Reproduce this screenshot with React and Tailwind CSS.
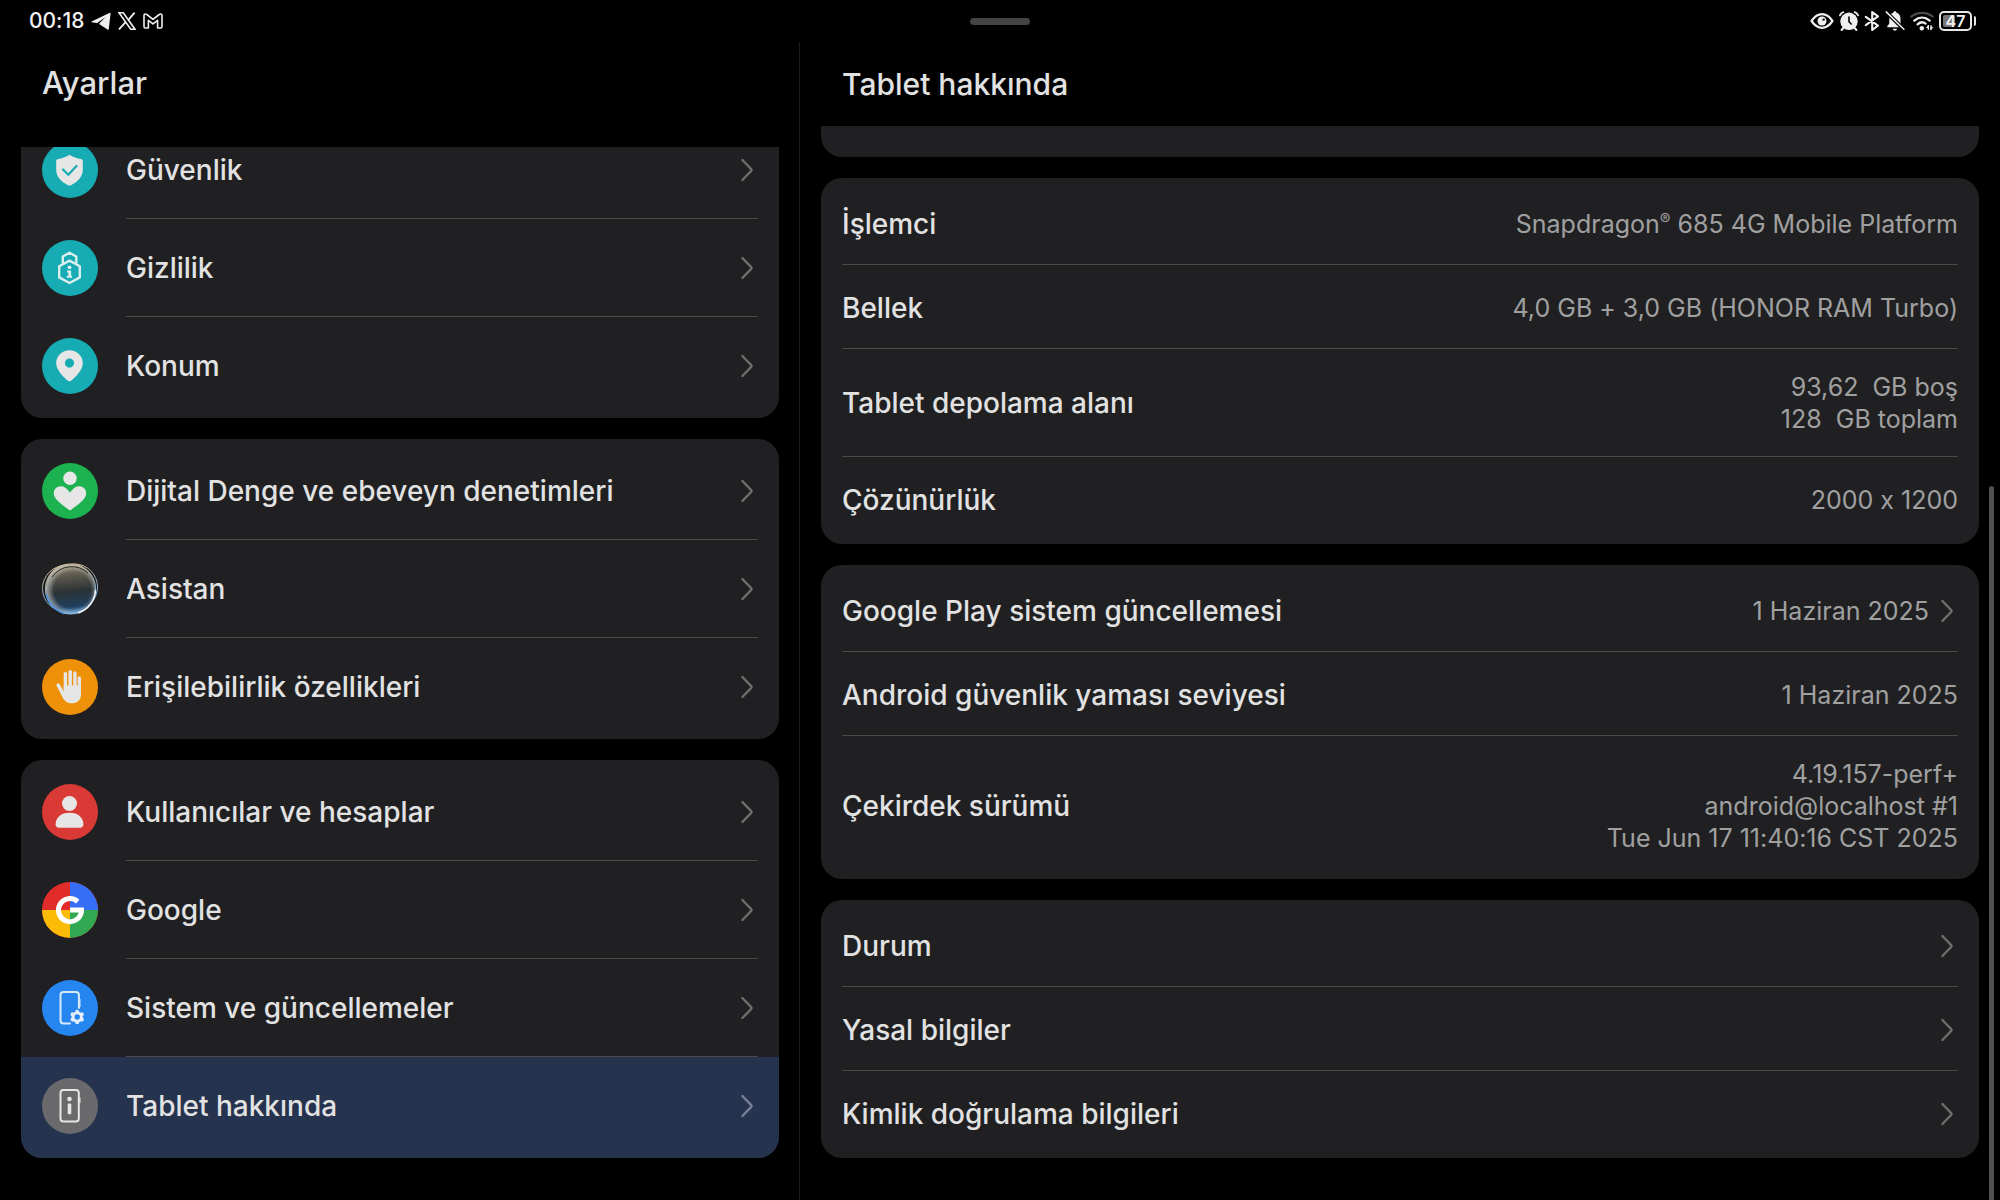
function Chevron({ className = "" }) {
  return (
    <svg aria-hidden="true" viewBox="0 0 12 24" className={`h-6 w-3 shrink-0 ${className}`} fill="none" stroke="currentColor" strokeWidth="2.4" strokeLinecap="round" strokeLinejoin="round">
      <path d="M1.400 2 10 10.900Q11 12 10 13.100L1.400 22" />
    </svg>
  );
}

/* ---------- status bar icons ---------- */

function TelegramIcon() {
  return (
    <svg aria-hidden="true" viewBox="0 0 20 18" className="h-[18px] w-5" fill="currentColor">
      <path d="M.6 9.500 18.900.800c.4-.2.8 0 .7.500l-1.800 15.800c-.1.700-.7.900-1.300.500L8.800 12.400c-.6-.4-.6-.9-.1-1.400l6-6.100L6.600 10.700c-.4.300-.8.300-1.300.2L.7 10.300c-.5-.1-.5-.6-.1-.8z" />
    </svg>
  );
}

function XIcon() {
  return (
    <svg aria-hidden="true" viewBox="0 0 18 18" className="size-[18px]" fill="none" stroke="currentColor">
      <path d="M1 .8h4.300L17 17.200h-4.300z" strokeWidth="1.600" />
      <path d="M16.600.600 10.400 7.800M7.600 10.200 1 17.400" strokeWidth="1.800" />
    </svg>
  );
}

function GmailIcon() {
  return (
    <svg aria-hidden="true" viewBox="0 0 20 16" className="h-4 w-5" fill="none" stroke="currentColor" strokeWidth="1.600" strokeLinejoin="round">
      <path d="M1 2.500Q1 1 2.400 1q.8 0 1.400.5L10 6.300l6.200-4.800Q16.800 1 17.600 1 19 1 19 2.500V13.500Q19 15 17.600 15H14.600V7.400L10 10.900 5.400 7.400V15H2.400Q1 15 1 13.500z" />
    </svg>
  );
}

function EyeIcon() {
  return (
    <svg aria-hidden="true" viewBox="0 0 24 16" className="h-4 w-6" fill="none">
      <path d="M1.500 8C5 3 8.300 1.200 12 1.200S19 3 22.500 8C19 13 15.700 14.800 12 14.800S5 13 1.500 8z" stroke="currentColor" strokeWidth="2.200" strokeLinejoin="round" />
      <circle cx="12" cy="8" r="4.500" fill="currentColor" />
      <circle cx="13.600" cy="6.600" r="1.200" fill="#000" />
    </svg>
  );
}

function AlarmIcon() {
  return (
    <svg aria-hidden="true" viewBox="0 0 20 20" className="size-5" fill="none" stroke="currentColor" strokeLinecap="round">
      <circle cx="10" cy="10.300" r="8.700" fill="currentColor" stroke="none" />
      <path d="M.9 4.300Q1.800 2 4.300 1.100M19.100 4.300Q18.200 2 15.700 1.100" strokeWidth="1.800" />
      <path d="M4.300 17 2.700 18.900M15.700 17l1.600 1.900" strokeWidth="2.200" />
      <path d="M10 6v4.700l2.200 2.300" stroke="#000" strokeWidth="1.600" />
    </svg>
  );
}

function BluetoothIcon() {
  return (
    <svg aria-hidden="true" viewBox="0 0 16 20" className="h-5 w-4" fill="none" stroke="currentColor" strokeWidth="2.100" strokeLinejoin="round" strokeLinecap="round">
      <path d="M1.800 5.800 14 14.600 8.200 19V1L14 5.400 1.800 14.200" />
    </svg>
  );
}

function BellOffIcon() {
  return (
    <svg aria-hidden="true" viewBox="0 0 20 20" className="size-5" fill="currentColor">
      <path d="M9.900.300c1 0 1.600.6 1.600 1.500 2.700.8 4 3 4 5.800v3.800c0 1.500 1 2.600 2 3.600v1.300H2.300V15c1-1 2-2.100 2-3.600V7.600c0-2.800 1.300-5 4-5.800C8.300.900 8.900.300 9.900.300z" />
      <path d="M7.800 17.700h4.200c-.2 1.200-1 1.900-2.100 1.900s-1.900-.7-2.100-1.900z" />
      <path d="M.5.300 19.500 18.900" stroke="#000" strokeWidth="3.800" />
      <path d="M1.200.900 18.900 18.200" stroke="currentColor" strokeWidth="1.500" strokeLinecap="round" />
    </svg>
  );
}

function WifiIcon() {
  return (
    <svg aria-hidden="true" viewBox="0 0 24 20" className="h-5 w-6" fill="none" strokeLinecap="round" strokeWidth="2.200">
      <path d="M1.300 5.600C7.500.500 16.500.500 22.700 5.600" stroke="#4a4a4a" />
      <path d="M4.300 9.700C9 5.700 15 5.700 19.700 9.700M7.500 13.300Q11.800 9.600 15.600 12.600" stroke="currentColor" />
      <circle cx="11.800" cy="17.200" r="2.200" fill="currentColor" />
      <path d="M18.300 14.300V18.800M21 14.300V18.800" stroke="currentColor" strokeWidth="1.400" strokeLinecap="butt" />
      <path d="M15.700 17 18.900 13.700V17zM23.600 16.300 20.400 19.600V16.300z" fill="currentColor" />
    </svg>
  );
}

function Battery({ level }) {
  return (
    <div className="flex items-center gap-0.5" role="img" aria-label={`Pil %${level}`}>
      <div className="grid h-5 w-[33px] rounded-[5px] border-2 border-[#e8e8e8] p-0.5">
        <div className="col-start-1 row-start-1 rounded-[2px] bg-[#767676]" style={{ width: `${level}%` }} />
        <span className="col-start-1 row-start-1 self-center text-center text-[16px] leading-3 font-semibold">{level}</span>
      </div>
      <div className="h-2.5 w-0.5 rounded-r bg-[#e8e8e8]" />
    </div>
  );
}

/* ---------- round menu icons, drawn in a 56-unit box ---------- */

function Round({ color, children }) {
  return (
    <svg aria-hidden="true" viewBox="0 0 56 56" className="size-14 shrink-0">
      <circle cx="28" cy="28" r="28" fill={color} />
      {children}
    </svg>
  );
}

const SecurityIcon = () => (
  <Round color="#17abb3">
    <path d="M27.500 12.800c4 2.500 7.500 3.600 11.300 4.300 1.300.3 2 1 2 2.300v8.400c0 6.900-5 12-11.300 15.100-1.400.7-2.600.7-4 0C19.200 39.800 14.200 34.700 14.200 27.800v-8.400c0-1.300.7-2 2-2.300 3.800-.7 7.300-1.800 11.300-4.300z" fill="#e6e6e6" />
    <path d="M21 27.500 26.300 32.800 34.500 24" fill="none" stroke="#17abb3" strokeWidth="2.200" strokeLinecap="round" strokeLinejoin="round" />
  </Round>
);

const PrivacyIcon = () => (
  <Round color="#17abb3">
    <g fill="none" stroke="#dcefef" strokeWidth="2.400" strokeLinejoin="round">
      <path d="M20.800 23.500V16.500L27.500 12.700 34.300 16.500V23.500" />
      <path d="M27.500 20.600 37.800 26.200V37.400L27.500 43 17.200 37.400V26.200z" />
    </g>
    <circle cx="27.500" cy="27.300" r="1.900" fill="#dcefef" />
    <path d="M25 30.500h4.100v5.200h1.100v2.100h-5.400v-2.100h1.600v-3.100H25z" fill="#dcefef" />
  </Round>
);

const LocationIcon = () => (
  <Round color="#17abb3">
    <path fillRule="evenodd" d="M27.500 12.200c7.400 0 13.300 5.700 13.300 12.900 0 6.900-6.300 13-11 17.200-1.500 1.300-3.100 1.300-4.600 0-4.700-4.200-11-10.300-11-17.200 0-7.200 5.900-12.900 13.300-12.900zm0 8.300a4.600 4.600 0 1 0 0 9.200 4.600 4.600 0 0 0 0-9.200z" fill="#e6e6e6" />
  </Round>
);

const WellbeingIcon = () => (
  <Round color="#1bb24f">
    <circle cx="28" cy="15.300" r="6.700" fill="#e6e6e6" />
    <path d="M28 29.500c3-4.500 6-6.300 9.300-6.300 4 0 6.900 3 6.900 6.900 0 6.900-8.200 11.200-14.600 16.500-1.100.9-2.100.9-3.200 0C20 41.300 11.800 37 11.800 30.100c0-3.900 2.900-6.900 6.900-6.900 3.300 0 6.300 1.800 9.300 6.300z" fill="#e6e6e6" />
  </Round>
);

const AssistantIcon = () => (
  <svg aria-hidden="true" viewBox="0 0 56 56" className="size-14 shrink-0">
    <defs>
      <linearGradient id="orbFill" x1="0.450" y1="0" x2="0.550" y2="1">
        <stop offset="0" stopColor="#988b70" />
        <stop offset="0.220" stopColor="#5f5b50" />
        <stop offset="0.550" stopColor="#2b3234" />
        <stop offset="0.850" stopColor="#20405f" />
        <stop offset="1" stopColor="#5b9ad8" />
      </linearGradient>
      <linearGradient id="orbRim" x1="0.300" y1="0" x2="0.550" y2="1">
        <stop offset="0" stopColor="#d6c299" />
        <stop offset="0.350" stopColor="#a9aaa4" />
        <stop offset="0.650" stopColor="#8fb3d6" />
        <stop offset="1" stopColor="#7cb8f2" />
      </linearGradient>
      <radialGradient id="orbEdge" cx="0.540" cy="0.520" r="0.540">
        <stop offset="0.700" stopColor="#dfe3df" stopOpacity="0" />
        <stop offset="1" stopColor="#dfe3df" stopOpacity="0.650" />
      </radialGradient>
    </defs>
    <circle cx="23.500" cy="27.500" r="23" fill="#17191b" stroke="url(#orbRim)" strokeWidth="1" />
    <circle cx="32.500" cy="26" r="23" fill="#17191b" stroke="url(#orbRim)" strokeWidth="1" />
    <circle cx="28.500" cy="28" r="25" fill="url(#orbFill)" stroke="url(#orbRim)" strokeWidth="1.200" />
    <circle cx="28.500" cy="28" r="24.500" fill="url(#orbEdge)" />
    <path d="M53.500 29A25 25 0 0 1 36 52" fill="none" stroke="#eef5fb" strokeWidth="1.600" />
    <path d="M4.500 33A26 26 0 0 0 22 52.500" fill="none" stroke="#4f93dc" strokeWidth="1.500" />
    <path d="M10 16A24 24 0 0 1 46 12" fill="none" stroke="#2c2820" strokeWidth="1" />
  </svg>
);

const AccessibilityIcon = () => (
  <Round color="#ef9009">
    <g stroke="#e6e6e6" strokeWidth="3.400" strokeLinecap="round" fill="none">
      <path d="M23.400 14.600V30M28.200 12.600V30M32.900 14V30M37.300 19V32" />
      <path d="M16.200 26.200 21.500 36" strokeWidth="3.600" />
    </g>
    <path d="M21.700 26.500H39V35.500C39 41 35.200 44.300 30 44.300 25.500 44.300 22.800 42.500 20.600 38.500L18.500 33.500 21.700 32z" fill="#e6e6e6" />
  </Round>
);

const UsersIcon = () => (
  <Round color="#d93a35">
    <circle cx="27.500" cy="19.500" r="7.500" fill="#e6e6e6" />
    <path d="M27.500 28.800c8.300 0 13.900 4.800 13.900 11.500 0 2.300-1.300 3.400-3.200 3.400H16.800c-1.900 0-3.200-1.100-3.200-3.400 0-6.700 5.600-11.500 13.900-11.500z" fill="#e6e6e6" />
  </Round>
);

const GoogleIcon = () => (
  <Round color="#e22c29">
    <path d="M28 0A28 28 0 0 1 56 28H28z" fill="#366ef5" />
    <path d="M56 28A28 28 0 0 1 28 56V28z" fill="#33a852" />
    <path d="M28 56A28 28 0 0 1 0 28H28z" fill="#fbbc05" />
    <path d="M35.700 19.600A11.500 11.500 0 1 0 39.500 28H28" fill="none" stroke="#fff" strokeWidth="5" strokeLinejoin="miter" />
  </Round>
);

const SystemIcon = () => (
  <Round color="#2486ee">
    <path d="M28 43.500H21.600Q18.500 43.500 18.500 40.400V15Q18.500 12 21.600 12H33.800Q36.900 12 36.900 15V28" fill="none" stroke="#d8e8fa" strokeWidth="2" strokeLinecap="round" />
    <path d="M37.900 19V27" stroke="#d8e8fa" strokeWidth="1.200" />
    <g stroke="#e6eefa" strokeWidth="4" strokeLinecap="round">
      <path d="M35.200 31.700V42.300M30.600 34.400 39.800 39.600M30.600 39.600 39.800 34.400" />
    </g>
    <circle cx="35.200" cy="37" r="5.600" fill="#e6eefa" />
    <circle cx="35.200" cy="37" r="2.700" fill="#2486ee" />
  </Round>
);

const AboutIcon = () => (
  <Round color="#6a6a6c">
    <rect x="18.500" y="12" width="18.300" height="31.500" rx="3" fill="none" stroke="#e6e6e6" strokeWidth="2" />
    <path d="M37.900 19.500V25" stroke="#e6e6e6" strokeWidth="1.200" />
    <circle cx="27.500" cy="21" r="2.300" fill="#e6e6e6" />
    <rect x="25.700" y="25.500" width="3.600" height="10.800" rx="1" fill="#e6e6e6" />
  </Round>
);

const menuGroups = [
  [
    { label: "Güvenlik", Icon: SecurityIcon },
    { label: "Gizlilik", Icon: PrivacyIcon },
    { label: "Konum", Icon: LocationIcon },
  ],
  [
    { label: "Dijital Denge ve ebeveyn denetimleri", Icon: WellbeingIcon },
    { label: "Asistan", Icon: AssistantIcon },
    { label: "Erişilebilirlik özellikleri", Icon: AccessibilityIcon },
  ],
  [
    { label: "Kullanıcılar ve hesaplar", Icon: UsersIcon },
    { label: "Google", Icon: GoogleIcon },
    { label: "Sistem ve güncellemeler", Icon: SystemIcon },
    { label: "Tablet hakkında", Icon: AboutIcon, selected: true },
  ],
];

const infoGroups = [
  [
    { label: "İşlemci", lines: [<>Snapdragon<sup className="text-[16px]">®</sup> 685 4G Mobile Platform</>] },
    { label: "Bellek", lines: ["4,0 GB + 3,0 GB (HONOR RAM Turbo)"] },
    { label: "Tablet depolama alanı", lines: ["93,62\u00a0 GB boş", "128\u00a0 GB toplam"] },
    { label: "Çözünürlük", lines: ["2000 x 1200"] },
  ],
  [
    { label: "Google Play sistem güncellemesi", lines: ["1 Haziran 2025"], link: true },
    { label: "Android güvenlik yaması seviyesi", lines: ["1 Haziran 2025"] },
    { label: "Çekirdek sürümü", lines: ["4.19.157-perf+", "android@localhost #1", "Tue Jun 17 11:40:16 CST 2025"] },
  ],
  [
    { label: "Durum", lines: [], link: true },
    { label: "Yasal bilgiler", lines: [], link: true },
    { label: "Kimlik doğrulama bilgileri", lines: [], link: true },
  ],
];

function MenuRow({ label, Icon, selected, last }) {
  return (
    <button
      type="button"
      aria-current={selected ? "page" : undefined}
      className={`flex w-full gap-7 px-[21px] text-left ${selected ? "-mb-[3px] bg-[#26334e] pb-[3px]" : ""}`}
    >
      <span className="flex items-center">
        <Icon />
      </span>
      <span className={`flex h-[98px] flex-1 items-center justify-between border-b pr-[5px] ${last ? "border-transparent" : "border-[#4a4a4b]"}`}>
        <span className="text-[28px] leading-8 font-medium">{label}</span>
        <Chevron className={selected ? "text-[#76809a]" : "text-[#6d6d6e]"} />
      </span>
    </button>
  );
}

function InfoRow({ label, lines, link, last }) {
  const Tag = link ? "button" : "div";
  return (
    <Tag
      type={link ? "button" : undefined}
      className={`flex w-full items-center justify-between gap-6 border-b text-left ${last ? "border-transparent" : "border-[#4a4a4b]"} ${lines.length > 1 ? "pt-[22px] pb-[21px]" : "pt-[27px] pb-6"}`}
    >
      <span className="text-[28px] leading-8 font-medium">{label}</span>
      <span className="flex items-center gap-3">
        <span className="text-right text-[25px] leading-8 text-[#a0a0a1]">
          {lines.map((line, i) => (
            <span key={i} className="block">{line}</span>
          ))}
        </span>
        {link && <Chevron className="mr-[5px] text-[#6d6d6e]" />}
      </span>
    </Tag>
  );
}

export default function App() {
  return (
    <div className="flex min-h-screen flex-col bg-black font-['Inter','Noto_Sans',sans-serif] text-[#e2e2e2] [font-variant-ligatures:no-contextual]">
      <header className="grid h-[42px] shrink-0 grid-cols-[1fr_auto_1fr] items-center px-6 text-[#f0f0f0]">
        <div className="flex items-center gap-[7px] pl-[5px]">
          <span className="text-[21px] leading-6 font-medium">00:18</span>
          <TelegramIcon />
          <XIcon />
          <GmailIcon />
        </div>
        <div className="h-[7px] w-[60px] rounded-full bg-[#444444]" />
        <div className="flex items-center justify-end gap-[5px]">
          <EyeIcon />
          <AlarmIcon />
          <BluetoothIcon />
          <BellOffIcon />
          <WifiIcon />
          <Battery level={47} />
        </div>
      </header>

      <div className="grid flex-1 grid-cols-[2fr_3fr]">
        <nav aria-label="Ayarlar" className="flex flex-col border-r border-[#1c1c1c] px-5 pl-[21px]">
          <h1 className="h-[105px] px-[21px] pt-[21px] text-[31px] leading-10 font-medium">Ayarlar</h1>
          <div className="overflow-hidden pb-[42px]">
            <div className="-mt-[29px] flex flex-col gap-[21px]">
              {menuGroups.map((group, g) => (
                <section key={g} className="overflow-hidden rounded-[21px] bg-[#202022] py-[3px]">
                  {group.map((item, i) => (
                    <MenuRow key={item.label} {...item} last={i === group.length - 1} />
                  ))}
                </section>
              ))}
            </div>
          </div>
        </nav>

        <main className="relative flex flex-col px-[21px]">
          <h2 className="h-[84px] px-[21px] pt-[22px] text-[30px] leading-10 font-medium">Tablet hakkında</h2>
          <div className="flex flex-col gap-[21px] pb-[42px]">
            <div className="h-[31px] rounded-b-[21px] bg-[#202022]" />
            {infoGroups.map((group, g) => (
              <section key={g} className="rounded-[21px] bg-[#202022] px-[21px] py-[3px]">
                {group.map((item, i) => (
                  <InfoRow key={item.label} {...item} last={i === group.length - 1} />
                ))}
              </section>
            ))}
          </div>
          <div aria-hidden="true" className="absolute right-1.5 bottom-0 h-[714px] w-[5px] rounded-t-full bg-[#515151]" />
        </main>
      </div>
    </div>
  );
}
